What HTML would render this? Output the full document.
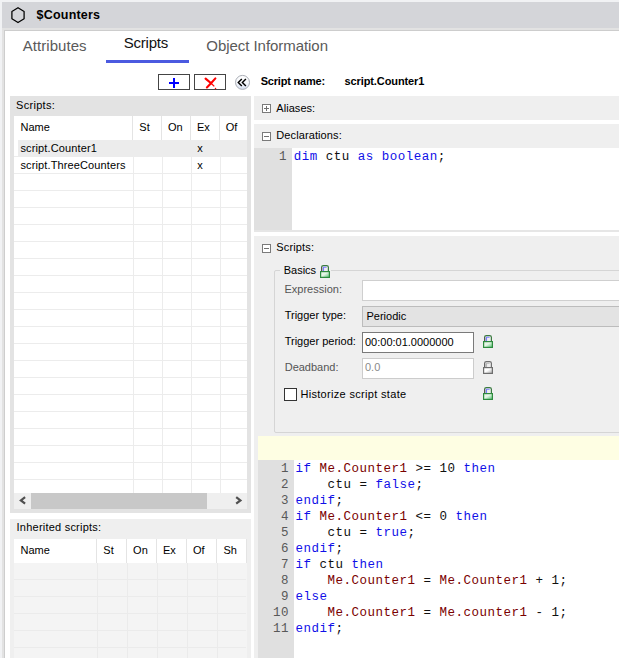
<!DOCTYPE html>
<html><head><meta charset="utf-8"><style>
html,body{margin:0;padding:0;}
body{width:619px;height:658px;overflow:hidden;position:relative;font-family:"Liberation Sans", sans-serif;}
body>div,body>svg{position:absolute;}
</style></head><body>
<div style="left:0px;top:0px;width:619px;height:658px;background:#f1f2f4;"></div>
<div style="left:2px;top:2px;width:617px;height:26px;background:#d4d5d9;"></div>
<div style="left:2px;top:28px;width:617px;height:630px;background:#e2e2e2;"></div>
<div style="left:4px;top:30px;width:615px;height:628px;background:#cdcdcd;"></div>
<div style="left:5px;top:31px;width:614px;height:627px;background:#ffffff;"></div>
<svg style="left:10px;top:7px;position:absolute" width="16" height="17" viewBox="0 0 16 17"><path d="M8 0.75 L14.1 4.5 L14.1 11.8 L8 15.5 L1.9 11.8 L1.9 4.5 Z" fill="none" stroke="#000" stroke-width="1.25" stroke-linejoin="round"/></svg>
<div style="left:36.6px;top:6.57px;font-family:'Liberation Sans', sans-serif;font-size:12.5px;line-height:16px;color:#000;white-space:pre;font-weight:bold;letter-spacing:0.2px;">$Counters</div>
<div style="left:22.8px;top:36.10px;font-family:'Liberation Sans', sans-serif;font-size:15px;line-height:19px;color:#5a5a5a;white-space:pre;letter-spacing:0.05px;">Attributes</div>
<div style="left:123.7px;top:32.60px;font-family:'Liberation Sans', sans-serif;font-size:15px;line-height:19px;color:#111111;white-space:pre;letter-spacing:-0.2px;">Scripts</div>
<div style="left:106px;top:60px;width:83px;height:3px;background:#4b5ae0;"></div>
<div style="left:206.3px;top:36.20px;font-family:'Liberation Sans', sans-serif;font-size:15px;line-height:19px;color:#5a5a5a;white-space:pre;letter-spacing:-0.05px;">Object Information</div>
<div style="left:158px;top:74px;width:32px;height:16px;background:#fff;box-sizing:border-box;border:1px solid #444;"></div>
<div style="left:168.5px;top:81.6px;width:10.5px;height:2px;background:#0000ff;"></div>
<div style="left:172.8px;top:77.5px;width:2px;height:10.2px;background:#0000ff;"></div>
<div style="left:194px;top:74px;width:32px;height:16px;background:#fff;box-sizing:border-box;border:1px solid #444;"></div>
<svg style="left:200px;top:74px;position:absolute" width="22" height="18" viewBox="0 0 22 18"><path d="M5.6 4.6 L10.8 9" stroke="#ff0000" stroke-width="2.2" stroke-linecap="round" fill="none"/><path d="M10.8 9 L14.3 12.4" stroke="#ff0000" stroke-width="1.3" fill="none"/><circle cx="15.5" cy="14.5" r="0.75" fill="#ff0000"/><path d="M15.4 4.4 L11 9.2 L6.9 13.4" stroke="#ff0000" stroke-width="2.1" stroke-linecap="round" fill="none"/></svg>
<svg style="left:234px;top:74px;position:absolute" width="17" height="17" viewBox="0 0 17 17"><defs><linearGradient id="cg" x1="0" y1="0" x2="0" y2="1"><stop offset="0" stop-color="#ffffff"/><stop offset="0.55" stop-color="#f4f6fa"/><stop offset="1" stop-color="#d5def0"/></linearGradient></defs><circle cx="8.5" cy="8.4" r="7" fill="url(#cg)" stroke="#a9adb5" stroke-width="1"/><path d="M7.8 5.1 L4.3 8.5 L7.8 11.9 M11.9 5.1 L8.4 8.5 L11.9 11.9" stroke="#000" stroke-width="1.45" fill="none"/></svg>
<div style="left:260.7px;top:74.09px;font-family:'Liberation Sans', sans-serif;font-size:11px;line-height:14px;color:#000;white-space:pre;font-weight:bold;letter-spacing:-0.2px;">Script name:</div>
<div style="left:344.5px;top:74.09px;font-family:'Liberation Sans', sans-serif;font-size:11px;line-height:14px;color:#000;white-space:pre;font-weight:bold;letter-spacing:-0.1px;">script.Counter1</div>
<div style="left:10px;top:96px;width:241px;height:417px;background:#e3e3e3;"></div>
<div style="left:16.1px;top:98.19px;font-family:'Liberation Sans', sans-serif;font-size:11px;line-height:14px;color:#000;white-space:pre;letter-spacing:0.28px;">Scripts:</div>
<div style="left:14px;top:116px;width:233px;height:392px;background:#ffffff;"></div>
<div style="left:132px;top:116px;width:1px;height:24px;background:#e4e4e4;"></div>
<div style="left:161px;top:116px;width:1px;height:24px;background:#e4e4e4;"></div>
<div style="left:190px;top:116px;width:1px;height:24px;background:#e4e4e4;"></div>
<div style="left:219px;top:116px;width:1px;height:24px;background:#e4e4e4;"></div>
<div style="left:133px;top:140px;width:1px;height:353px;background:#ececec;"></div>
<div style="left:162px;top:140px;width:1px;height:353px;background:#ececec;"></div>
<div style="left:191px;top:140px;width:1px;height:353px;background:#ececec;"></div>
<div style="left:220px;top:140px;width:1px;height:353px;background:#ececec;"></div>
<div style="left:14px;top:156px;width:233px;height:1px;background:#ececec;"></div>
<div style="left:14px;top:173px;width:233px;height:1px;background:#ececec;"></div>
<div style="left:14px;top:190px;width:233px;height:1px;background:#ececec;"></div>
<div style="left:14px;top:207px;width:233px;height:1px;background:#ececec;"></div>
<div style="left:14px;top:224px;width:233px;height:1px;background:#ececec;"></div>
<div style="left:14px;top:241px;width:233px;height:1px;background:#ececec;"></div>
<div style="left:14px;top:258px;width:233px;height:1px;background:#ececec;"></div>
<div style="left:14px;top:275px;width:233px;height:1px;background:#ececec;"></div>
<div style="left:14px;top:292px;width:233px;height:1px;background:#ececec;"></div>
<div style="left:14px;top:309px;width:233px;height:1px;background:#ececec;"></div>
<div style="left:14px;top:326px;width:233px;height:1px;background:#ececec;"></div>
<div style="left:14px;top:343px;width:233px;height:1px;background:#ececec;"></div>
<div style="left:14px;top:360px;width:233px;height:1px;background:#ececec;"></div>
<div style="left:14px;top:377px;width:233px;height:1px;background:#ececec;"></div>
<div style="left:14px;top:394px;width:233px;height:1px;background:#ececec;"></div>
<div style="left:14px;top:411px;width:233px;height:1px;background:#ececec;"></div>
<div style="left:14px;top:428px;width:233px;height:1px;background:#ececec;"></div>
<div style="left:14px;top:445px;width:233px;height:1px;background:#ececec;"></div>
<div style="left:14px;top:462px;width:233px;height:1px;background:#ececec;"></div>
<div style="left:14px;top:479px;width:233px;height:1px;background:#ececec;"></div>
<div style="left:18px;top:140px;width:229px;height:16px;background:#ececec;"></div>
<div style="left:20.5px;top:120.39px;font-family:'Liberation Sans', sans-serif;font-size:11px;line-height:14px;color:#000;white-space:pre;">Name</div>
<div style="left:139.3px;top:120.39px;font-family:'Liberation Sans', sans-serif;font-size:11px;line-height:14px;color:#000;white-space:pre;">St</div>
<div style="left:168px;top:120.39px;font-family:'Liberation Sans', sans-serif;font-size:11px;line-height:14px;color:#000;white-space:pre;">On</div>
<div style="left:197px;top:120.39px;font-family:'Liberation Sans', sans-serif;font-size:11px;line-height:14px;color:#000;white-space:pre;">Ex</div>
<div style="left:225.8px;top:120.39px;font-family:'Liberation Sans', sans-serif;font-size:11px;line-height:14px;color:#000;white-space:pre;">Of</div>
<div style="left:20.4px;top:141.39px;font-family:'Liberation Sans', sans-serif;font-size:11px;line-height:14px;color:#000;white-space:pre;letter-spacing:0.13px;">script.Counter1</div>
<div style="left:197.2px;top:141.39px;font-family:'Liberation Sans', sans-serif;font-size:11px;line-height:14px;color:#000;white-space:pre;">x</div>
<div style="left:20.4px;top:158.19px;font-family:'Liberation Sans', sans-serif;font-size:11px;line-height:14px;color:#000;white-space:pre;letter-spacing:0.13px;">script.ThreeCounters</div>
<div style="left:197.2px;top:158.19px;font-family:'Liberation Sans', sans-serif;font-size:11px;line-height:14px;color:#000;white-space:pre;">x</div>
<div style="left:14px;top:493px;width:233px;height:16px;background:#efefef;"></div>
<div style="left:31px;top:493px;width:176px;height:16px;background:#c8c8c8;"></div>
<svg style="left:18px;top:495px;position:absolute" width="10" height="11" viewBox="0 0 10 11"><path d="M7.1 2.2 L2.9 5.4 L7.1 8.6" stroke="#505050" stroke-width="2.2" fill="none"/></svg>
<svg style="left:234px;top:495px;position:absolute" width="10" height="11" viewBox="0 0 10 11"><path d="M2.2 2.2 L6.4 5.4 L2.2 8.6" stroke="#505050" stroke-width="2.2" fill="none"/></svg>
<div style="left:10px;top:519px;width:241px;height:139px;background:#efefef;"></div>
<div style="left:16.6px;top:520.39px;font-family:'Liberation Sans', sans-serif;font-size:11px;line-height:14px;color:#000;white-space:pre;letter-spacing:0.22px;">Inherited scripts:</div>
<div style="left:14px;top:539px;width:232px;height:24px;background:#ffffff;"></div>
<div style="left:96px;top:539px;width:1px;height:24px;background:#e4e4e4;"></div>
<div style="left:126px;top:539px;width:1px;height:24px;background:#e4e4e4;"></div>
<div style="left:156px;top:539px;width:1px;height:24px;background:#e4e4e4;"></div>
<div style="left:186px;top:539px;width:1px;height:24px;background:#e4e4e4;"></div>
<div style="left:216px;top:539px;width:1px;height:24px;background:#e4e4e4;"></div>
<div style="left:14px;top:563px;width:233px;height:95px;background:#f4f4f4;"></div>
<div style="left:97px;top:563px;width:1px;height:95px;background:#ebebeb;"></div>
<div style="left:127px;top:563px;width:1px;height:95px;background:#ebebeb;"></div>
<div style="left:157px;top:563px;width:1px;height:95px;background:#ebebeb;"></div>
<div style="left:187px;top:563px;width:1px;height:95px;background:#ebebeb;"></div>
<div style="left:217px;top:563px;width:1px;height:95px;background:#ebebeb;"></div>
<div style="left:246px;top:539px;width:1px;height:24px;background:#e4e4e4;"></div>
<div style="left:14px;top:579px;width:232px;height:1px;background:#ebebeb;"></div>
<div style="left:14px;top:596px;width:232px;height:1px;background:#ebebeb;"></div>
<div style="left:14px;top:613px;width:232px;height:1px;background:#ebebeb;"></div>
<div style="left:14px;top:630px;width:232px;height:1px;background:#ebebeb;"></div>
<div style="left:14px;top:647px;width:232px;height:1px;background:#ebebeb;"></div>
<div style="left:20.5px;top:543.19px;font-family:'Liberation Sans', sans-serif;font-size:11px;line-height:14px;color:#000;white-space:pre;">Name</div>
<div style="left:103.3px;top:543.19px;font-family:'Liberation Sans', sans-serif;font-size:11px;line-height:14px;color:#000;white-space:pre;">St</div>
<div style="left:133.1px;top:543.19px;font-family:'Liberation Sans', sans-serif;font-size:11px;line-height:14px;color:#000;white-space:pre;">On</div>
<div style="left:163px;top:543.19px;font-family:'Liberation Sans', sans-serif;font-size:11px;line-height:14px;color:#000;white-space:pre;">Ex</div>
<div style="left:193px;top:543.19px;font-family:'Liberation Sans', sans-serif;font-size:11px;line-height:14px;color:#000;white-space:pre;">Of</div>
<div style="left:223.4px;top:543.19px;font-family:'Liberation Sans', sans-serif;font-size:11px;line-height:14px;color:#000;white-space:pre;">Sh</div>
<div style="left:254px;top:96px;width:365px;height:24px;background:#efefef;"></div>
<svg style="left:262px;top:104px;position:absolute" width="9" height="9" viewBox="0 0 9 9"><rect x="0.5" y="0.5" width="8" height="8" fill="#fff" stroke="#7a7a7a"/><path d="M2 4.5 H7" stroke="#707070"/><path d="M4.5 2 V7" stroke="#707070"/></svg>
<div style="left:276.3px;top:100.59px;font-family:'Liberation Sans', sans-serif;font-size:11px;line-height:14px;color:#000;white-space:pre;letter-spacing:0.05px;">Aliases:</div>
<div style="left:254px;top:124px;width:365px;height:108px;background:#efefef;"></div>
<svg style="left:262px;top:132px;position:absolute" width="9" height="9" viewBox="0 0 9 9"><rect x="0.5" y="0.5" width="8" height="8" fill="#fff" stroke="#7a7a7a"/><path d="M2 4.5 H7" stroke="#707070"/></svg>
<div style="left:276.3px;top:128.29px;font-family:'Liberation Sans', sans-serif;font-size:11px;line-height:14px;color:#000;white-space:pre;letter-spacing:0.1px;">Declarations:</div>
<div style="left:254px;top:148px;width:365px;height:82px;background:#ffffff;"></div>
<div style="left:254px;top:148px;width:38px;height:82px;background:#e0e0e0;"></div>
<div style="left:254px;top:230px;width:365px;height:2px;background:#e6e6e6;"></div>
<div style="left:254px;top:236px;width:365px;height:422px;background:#efefef;"></div>
<svg style="left:262px;top:244px;position:absolute" width="9" height="9" viewBox="0 0 9 9"><rect x="0.5" y="0.5" width="8" height="8" fill="#fff" stroke="#7a7a7a"/><path d="M2 4.5 H7" stroke="#707070"/></svg>
<div style="left:276.3px;top:240.19px;font-family:'Liberation Sans', sans-serif;font-size:11px;line-height:14px;color:#000;white-space:pre;letter-spacing:0.15px;">Scripts:</div>
<div style="left:274px;top:270px;width:400px;height:163px;box-sizing:border-box;border:1px solid #d5d5d5;border-radius:2px;"></div>
<div style="left:280px;top:262px;width:51px;height:14px;background:#efefef;"></div>
<div style="left:283.7px;top:262.99px;font-family:'Liberation Sans', sans-serif;font-size:11px;line-height:14px;color:#000;white-space:pre;">Basics</div>
<svg style="left:318.6px;top:264px;position:absolute" width="12" height="15" viewBox="0 0 12 15"><defs><linearGradient id="lg105" x1="0" y1="0" x2="1" y2="1"><stop offset="0" stop-color="#e6f6e6"/><stop offset="0.45" stop-color="#e6f6e6"/><stop offset="1" stop-color="#50c070"/></linearGradient></defs><path d="M2.6 7 V3.2 Q2.6 1.6 4.4 1.6 H7.6 Q9.4 1.6 9.4 3.2 V7" fill="none" stroke="#3a7a40" stroke-width="1.2"/><path d="M2.6 7 V3.4" fill="none" stroke="#555" stroke-width="1.2"/><path d="M4.5 7 V3.3 H7.6" fill="none" stroke="#7a7cff" stroke-width="1.1"/><rect x="1.6" y="7.6" width="8.8" height="5.8" fill="url(#lg105)" stroke="#2e8b3e" stroke-width="1.2"/></svg>
<div style="left:284.5px;top:281.99px;font-family:'Liberation Sans', sans-serif;font-size:11px;line-height:14px;color:#555555;white-space:pre;">Expression:</div>
<div style="left:362px;top:280px;width:257px;height:21px;background:#ffffff;box-sizing:border-box;border:1px solid #cfcfcf;border-right:none;"></div>
<div style="left:284.7px;top:308.19px;font-family:'Liberation Sans', sans-serif;font-size:11px;line-height:14px;color:#000;white-space:pre;">Trigger type:</div>
<div style="left:362px;top:306px;width:257px;height:21px;background:#e3e3e3;box-sizing:border-box;border:1px solid #bcbcbc;border-right:none;"></div>
<div style="left:366.5px;top:308.89px;font-family:'Liberation Sans', sans-serif;font-size:11px;line-height:14px;color:#000;white-space:pre;">Periodic</div>
<div style="left:284.7px;top:333.79px;font-family:'Liberation Sans', sans-serif;font-size:11px;line-height:14px;color:#000;white-space:pre;">Trigger period:</div>
<div style="left:362px;top:332px;width:112px;height:21px;background:#ffffff;box-sizing:border-box;border:1px solid #7a7a7a;"></div>
<div style="left:365px;top:334.79px;font-family:'Liberation Sans', sans-serif;font-size:11px;line-height:14px;color:#000;white-space:pre;">00:00:01.0000000</div>
<svg style="left:482px;top:334px;position:absolute" width="12" height="15" viewBox="0 0 12 15"><defs><linearGradient id="lg114" x1="0" y1="0" x2="1" y2="1"><stop offset="0" stop-color="#e6f6e6"/><stop offset="0.45" stop-color="#e6f6e6"/><stop offset="1" stop-color="#50c070"/></linearGradient></defs><path d="M2.6 7 V3.2 Q2.6 1.6 4.4 1.6 H7.6 Q9.4 1.6 9.4 3.2 V7" fill="none" stroke="#3a7a40" stroke-width="1.2"/><path d="M2.6 7 V3.4" fill="none" stroke="#555" stroke-width="1.2"/><path d="M4.5 7 V3.3 H7.6" fill="none" stroke="#7a7cff" stroke-width="1.1"/><rect x="1.6" y="7.6" width="8.8" height="5.8" fill="url(#lg114)" stroke="#2e8b3e" stroke-width="1.2"/></svg>
<div style="left:284.7px;top:359.79px;font-family:'Liberation Sans', sans-serif;font-size:11px;line-height:14px;color:#555555;white-space:pre;">Deadband:</div>
<div style="left:362px;top:358px;width:112px;height:21px;background:#ffffff;box-sizing:border-box;border:1px solid #cccccc;"></div>
<div style="left:365px;top:360.49px;font-family:'Liberation Sans', sans-serif;font-size:11px;line-height:14px;color:#8a8a8a;white-space:pre;">0.0</div>
<svg style="left:482px;top:360px;position:absolute" width="12" height="15" viewBox="0 0 12 15"><defs><linearGradient id="lg118" x1="0" y1="0" x2="1" y2="1"><stop offset="0" stop-color="#ffffff"/><stop offset="0.45" stop-color="#ffffff"/><stop offset="1" stop-color="#a8a8a8"/></linearGradient></defs><path d="M2.6 7 V3.2 Q2.6 1.6 4.4 1.6 H7.6 Q9.4 1.6 9.4 3.2 V7" fill="none" stroke="#707070" stroke-width="1.2"/><path d="M2.6 7 V3.4" fill="none" stroke="#666" stroke-width="1.2"/><path d="M4.5 7 V3.3 H7.6" fill="none" stroke="#b8b8b8" stroke-width="1.1"/><rect x="1.6" y="7.6" width="8.8" height="5.8" fill="url(#lg118)" stroke="#6e6e6e" stroke-width="1.2"/></svg>
<div style="left:284px;top:388px;width:13px;height:13px;background:#ffffff;box-sizing:border-box;border:1px solid #333;"></div>
<div style="left:300.4px;top:386.79px;font-family:'Liberation Sans', sans-serif;font-size:11px;line-height:14px;color:#000;white-space:pre;letter-spacing:0.32px;">Historize script state</div>
<svg style="left:482px;top:386px;position:absolute" width="12" height="15" viewBox="0 0 12 15"><defs><linearGradient id="lg121" x1="0" y1="0" x2="1" y2="1"><stop offset="0" stop-color="#e6f6e6"/><stop offset="0.45" stop-color="#e6f6e6"/><stop offset="1" stop-color="#50c070"/></linearGradient></defs><path d="M2.6 7 V3.2 Q2.6 1.6 4.4 1.6 H7.6 Q9.4 1.6 9.4 3.2 V7" fill="none" stroke="#3a7a40" stroke-width="1.2"/><path d="M2.6 7 V3.4" fill="none" stroke="#555" stroke-width="1.2"/><path d="M4.5 7 V3.3 H7.6" fill="none" stroke="#7a7cff" stroke-width="1.1"/><rect x="1.6" y="7.6" width="8.8" height="5.8" fill="url(#lg121)" stroke="#2e8b3e" stroke-width="1.2"/></svg>
<div style="left:258px;top:436px;width:361px;height:24px;background:#fefee3;"></div>
<div style="left:258px;top:460px;width:361px;height:198px;background:#ffffff;"></div>
<div style="left:258px;top:460px;width:36px;height:198px;background:#e0e0e0;"></div>
<div style="left:279px;top:149.17px;font-family:'Liberation Mono', monospace;font-size:12.5px;line-height:16px;color:#585858;white-space:pre;letter-spacing:0.5px;">1</div>
<div style="left:293.7px;top:149.17px;font-family:'Liberation Mono', monospace;font-size:12.5px;line-height:16px;color:#101010;white-space:pre;letter-spacing:0.5px;"><span style="color:#1010e8">dim</span><span style="color:#101010"> ctu </span><span style="color:#1010e8">as</span><span style="color:#101010"> </span><span style="color:#1010e8">boolean</span><span style="color:#101010">;</span></div>
<div style="left:281px;top:461.17px;font-family:'Liberation Mono', monospace;font-size:12.5px;line-height:16px;color:#585858;white-space:pre;letter-spacing:0.5px;">1</div>
<div style="left:295.5px;top:461.17px;font-family:'Liberation Mono', monospace;font-size:12.5px;line-height:16px;color:#101010;white-space:pre;letter-spacing:0.5px;"><span style="color:#1010e8">if</span><span style="color:#101010"> </span><span style="color:#7a0000">Me.Counter1</span><span style="color:#101010"> &gt;= 10 </span><span style="color:#1010e8">then</span></div>
<div style="left:281px;top:477.17px;font-family:'Liberation Mono', monospace;font-size:12.5px;line-height:16px;color:#585858;white-space:pre;letter-spacing:0.5px;">2</div>
<div style="left:295.5px;top:477.17px;font-family:'Liberation Mono', monospace;font-size:12.5px;line-height:16px;color:#101010;white-space:pre;letter-spacing:0.5px;"><span style="color:#101010">    ctu = </span><span style="color:#1010e8">false</span><span style="color:#101010">;</span></div>
<div style="left:281px;top:493.17px;font-family:'Liberation Mono', monospace;font-size:12.5px;line-height:16px;color:#585858;white-space:pre;letter-spacing:0.5px;">3</div>
<div style="left:295.5px;top:493.17px;font-family:'Liberation Mono', monospace;font-size:12.5px;line-height:16px;color:#101010;white-space:pre;letter-spacing:0.5px;"><span style="color:#1010e8">endif</span><span style="color:#101010">;</span></div>
<div style="left:281px;top:509.17px;font-family:'Liberation Mono', monospace;font-size:12.5px;line-height:16px;color:#585858;white-space:pre;letter-spacing:0.5px;">4</div>
<div style="left:295.5px;top:509.17px;font-family:'Liberation Mono', monospace;font-size:12.5px;line-height:16px;color:#101010;white-space:pre;letter-spacing:0.5px;"><span style="color:#1010e8">if</span><span style="color:#101010"> </span><span style="color:#7a0000">Me.Counter1</span><span style="color:#101010"> &lt;= 0 </span><span style="color:#1010e8">then</span></div>
<div style="left:281px;top:525.17px;font-family:'Liberation Mono', monospace;font-size:12.5px;line-height:16px;color:#585858;white-space:pre;letter-spacing:0.5px;">5</div>
<div style="left:295.5px;top:525.17px;font-family:'Liberation Mono', monospace;font-size:12.5px;line-height:16px;color:#101010;white-space:pre;letter-spacing:0.5px;"><span style="color:#101010">    ctu = </span><span style="color:#1010e8">true</span><span style="color:#101010">;</span></div>
<div style="left:281px;top:541.17px;font-family:'Liberation Mono', monospace;font-size:12.5px;line-height:16px;color:#585858;white-space:pre;letter-spacing:0.5px;">6</div>
<div style="left:295.5px;top:541.17px;font-family:'Liberation Mono', monospace;font-size:12.5px;line-height:16px;color:#101010;white-space:pre;letter-spacing:0.5px;"><span style="color:#1010e8">endif</span><span style="color:#101010">;</span></div>
<div style="left:281px;top:557.17px;font-family:'Liberation Mono', monospace;font-size:12.5px;line-height:16px;color:#585858;white-space:pre;letter-spacing:0.5px;">7</div>
<div style="left:295.5px;top:557.17px;font-family:'Liberation Mono', monospace;font-size:12.5px;line-height:16px;color:#101010;white-space:pre;letter-spacing:0.5px;"><span style="color:#1010e8">if</span><span style="color:#101010"> ctu </span><span style="color:#1010e8">then</span></div>
<div style="left:281px;top:573.17px;font-family:'Liberation Mono', monospace;font-size:12.5px;line-height:16px;color:#585858;white-space:pre;letter-spacing:0.5px;">8</div>
<div style="left:295.5px;top:573.17px;font-family:'Liberation Mono', monospace;font-size:12.5px;line-height:16px;color:#101010;white-space:pre;letter-spacing:0.5px;"><span style="color:#101010">    </span><span style="color:#7a0000">Me.Counter1</span><span style="color:#101010"> = </span><span style="color:#7a0000">Me.Counter1</span><span style="color:#101010"> + 1;</span></div>
<div style="left:281px;top:589.17px;font-family:'Liberation Mono', monospace;font-size:12.5px;line-height:16px;color:#585858;white-space:pre;letter-spacing:0.5px;">9</div>
<div style="left:295.5px;top:589.17px;font-family:'Liberation Mono', monospace;font-size:12.5px;line-height:16px;color:#101010;white-space:pre;letter-spacing:0.5px;"><span style="color:#1010e8">else</span></div>
<div style="left:273px;top:605.17px;font-family:'Liberation Mono', monospace;font-size:12.5px;line-height:16px;color:#585858;white-space:pre;letter-spacing:0.5px;">10</div>
<div style="left:295.5px;top:605.17px;font-family:'Liberation Mono', monospace;font-size:12.5px;line-height:16px;color:#101010;white-space:pre;letter-spacing:0.5px;"><span style="color:#101010">    </span><span style="color:#7a0000">Me.Counter1</span><span style="color:#101010"> = </span><span style="color:#7a0000">Me.counter1</span><span style="color:#101010"> - 1;</span></div>
<div style="left:273px;top:621.17px;font-family:'Liberation Mono', monospace;font-size:12.5px;line-height:16px;color:#585858;white-space:pre;letter-spacing:0.5px;">11</div>
<div style="left:295.5px;top:621.17px;font-family:'Liberation Mono', monospace;font-size:12.5px;line-height:16px;color:#101010;white-space:pre;letter-spacing:0.5px;"><span style="color:#1010e8">endif</span><span style="color:#101010">;</span></div>
</body></html>
